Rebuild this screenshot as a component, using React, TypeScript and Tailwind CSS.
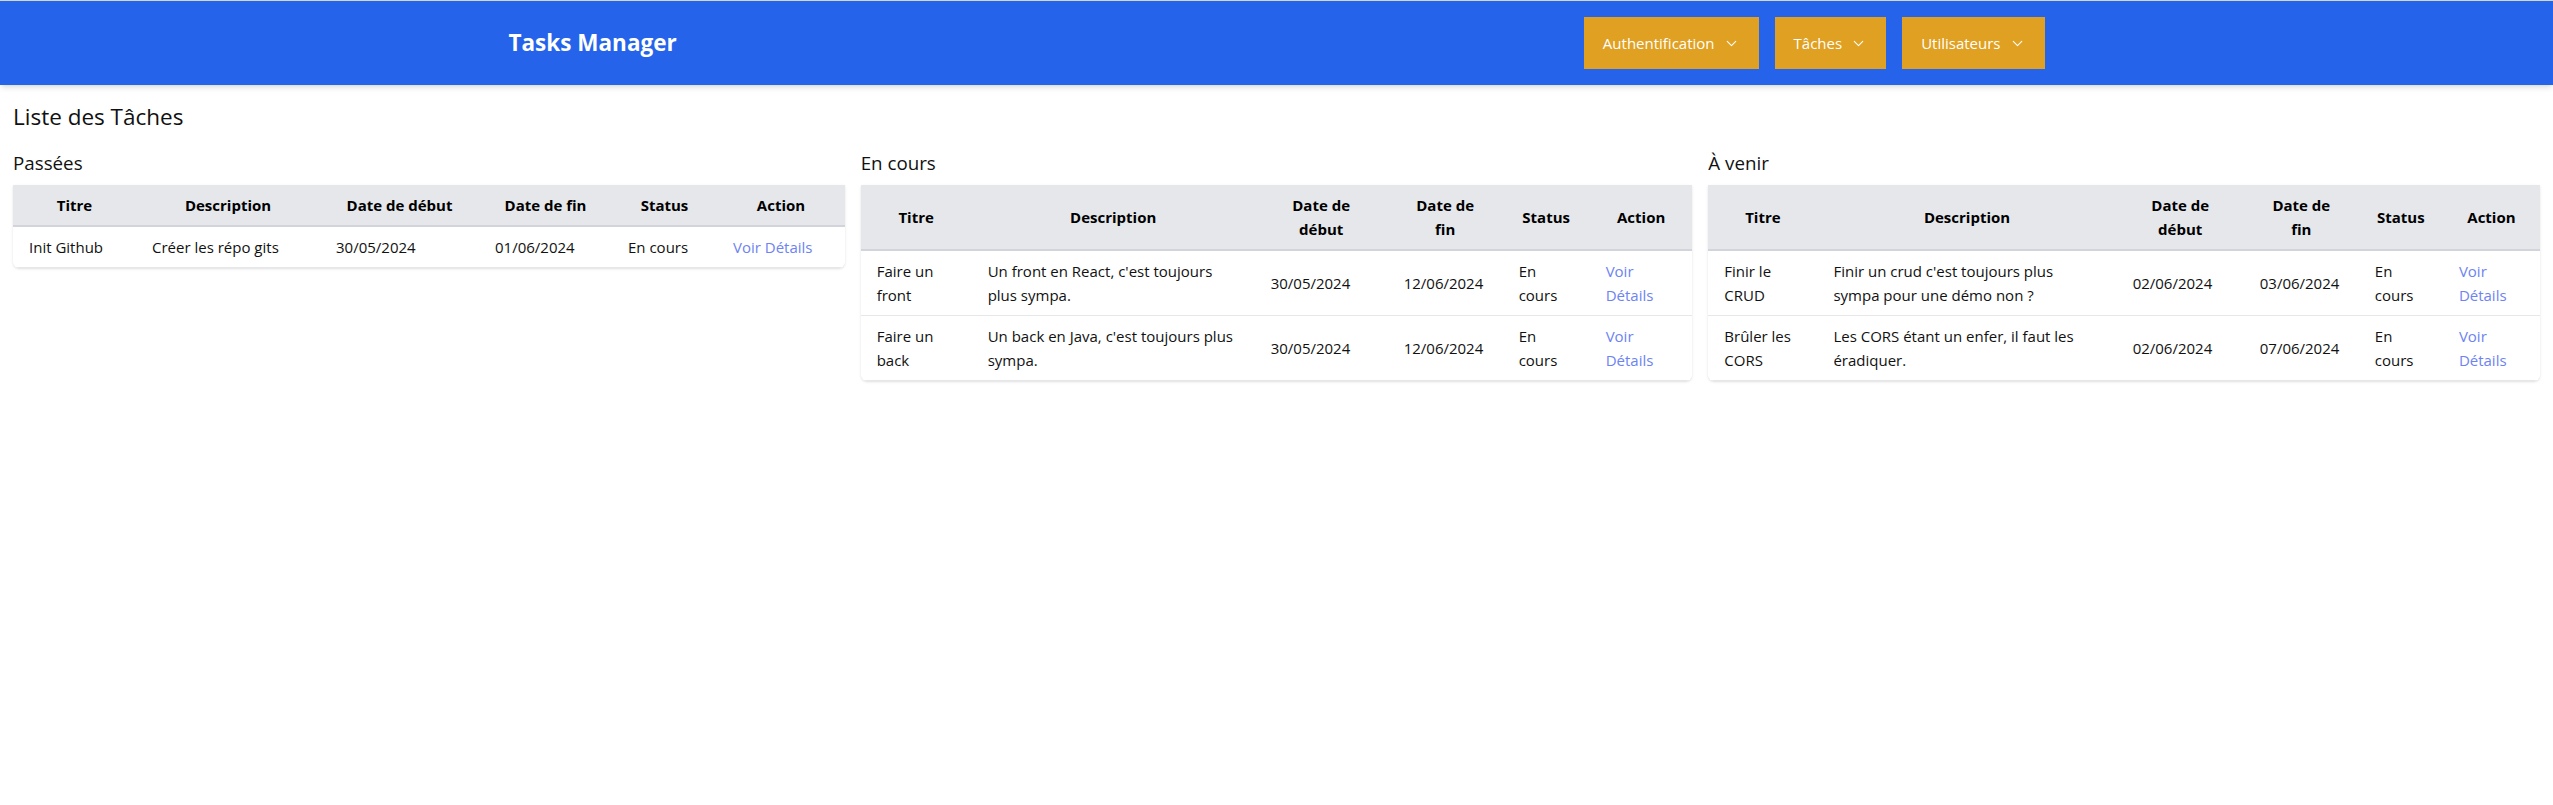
import { ChevronDown } from "lucide-react";

type Task = {
  titre: string;
  description: string;
  debut: string;
  fin: string;
  status: string;
};

type Section = {
  title: string;
  // column widths + header padding, one entry per column
  cols: string[];
  tasks: Task[];
};

const HEADERS = ["Titre", "Description", "Date de début", "Date de fin", "Status", "Action"];

const SECTIONS: Section[] = [
  {
    title: "Passées",
    cols: ["w-[123px] px-4", "w-[184px] px-4", "w-[159px] px-4", "w-[133px] px-4", "w-[105px] px-4", "w-[128px] px-4"],
    tasks: [
      {
        titre: "Init Github",
        description: "Créer les répo gits",
        debut: "30/05/2024",
        fin: "01/06/2024",
        status: "En cours",
      },
    ],
  },
  {
    title: "En cours",
    cols: ["w-[111px] px-4", "w-[283px] px-4", "w-[133px] px-4", "w-[115px] px-5", "w-[87px] px-4", "w-[103px] px-4"],
    tasks: [
      {
        titre: "Faire un front",
        description: "Un front en React, c'est toujours plus sympa.",
        debut: "30/05/2024",
        fin: "12/06/2024",
        status: "En cours",
      },
      {
        titre: "Faire un back",
        description: "Un back en Java, c'est toujours plus sympa.",
        debut: "30/05/2024",
        fin: "12/06/2024",
        status: "En cours",
      },
    ],
  },
  {
    title: "À venir",
    cols: ["w-[109px] px-4", "w-[299px] px-4", "w-[127px] px-4", "w-[115px] px-5", "w-[84px] px-4", "w-[97px] px-4"],
    tasks: [
      {
        titre: "Finir le CRUD",
        description: "Finir un crud c'est toujours plus sympa pour une démo non ?",
        debut: "02/06/2024",
        fin: "03/06/2024",
        status: "En cours",
      },
      {
        titre: "Brûler les CORS",
        description: "Les CORS étant un enfer, il faut les éradiquer.",
        debut: "02/06/2024",
        fin: "07/06/2024",
        status: "En cours",
      },
    ],
  },
];

const MENUS = ["Authentification", "Tâches", "Utilisateurs"];

function Navbar() {
  return (
    <nav className="border-t border-[#d4d4d8] bg-[#2563eb] shadow-md">
      <div className="mx-auto flex max-w-[1536px] items-center justify-between py-4">
        <h1 className="text-[22.5px] font-bold leading-8 text-white">Tasks Manager</h1>
        <div className="flex gap-4">
          {MENUS.map((menu) => (
            <button
              key={menu}
              className="flex h-[52px] items-center gap-2 bg-[#e0a021] px-[19px] text-[15px] text-white"
            >
              {menu}
              <ChevronDown size={17} strokeWidth={1.5} />
            </button>
          ))}
        </div>
      </div>
    </nav>
  );
}

function TaskTable({ section }: { section: Section }) {
  return (
    <div>
      <h3 className="mb-2 text-[18.75px] leading-7 text-[#111]">{section.title}</h3>
      <div className="overflow-hidden rounded-b-md shadow-sm">
        <table className="w-full table-fixed text-[15px] leading-6">
          <thead className="border-b-2 border-[#d1d5db] bg-[#e5e7eb]">
            <tr>
              {HEADERS.map((h, i) => (
                <th key={h} className={`${section.cols[i]} py-2 text-center font-bold text-black`}>
                  {h}
                </th>
              ))}
            </tr>
          </thead>
          <tbody>
            {section.tasks.map((task) => (
              <tr key={task.titre} className="border-b border-[#e5e7eb] text-[#111]">
                <td className="px-4 py-2">{task.titre}</td>
                <td className="px-4 py-2">{task.description}</td>
                <td className="px-4 py-2">{task.debut}</td>
                <td className="px-4 py-2">{task.fin}</td>
                <td className="px-4 py-2">{task.status}</td>
                <td className="px-4 py-2">
                  <a href="#" className="text-[#6d83f2]">
                    Voir Détails
                  </a>
                </td>
              </tr>
            ))}
          </tbody>
        </table>
      </div>
    </div>
  );
}

export default function App() {
  return (
    <div className="min-h-screen bg-white font-['Open_Sans',sans-serif]">
      <Navbar />
      <main className="px-[13px] pt-4">
        <h2 className="mb-4 text-[22.5px] leading-8 text-[#111]">Liste des Tâches</h2>
        <div className="grid grid-cols-3 gap-4">
          {SECTIONS.map((section) => (
            <TaskTable key={section.title} section={section} />
          ))}
        </div>
      </main>
    </div>
  );
}
